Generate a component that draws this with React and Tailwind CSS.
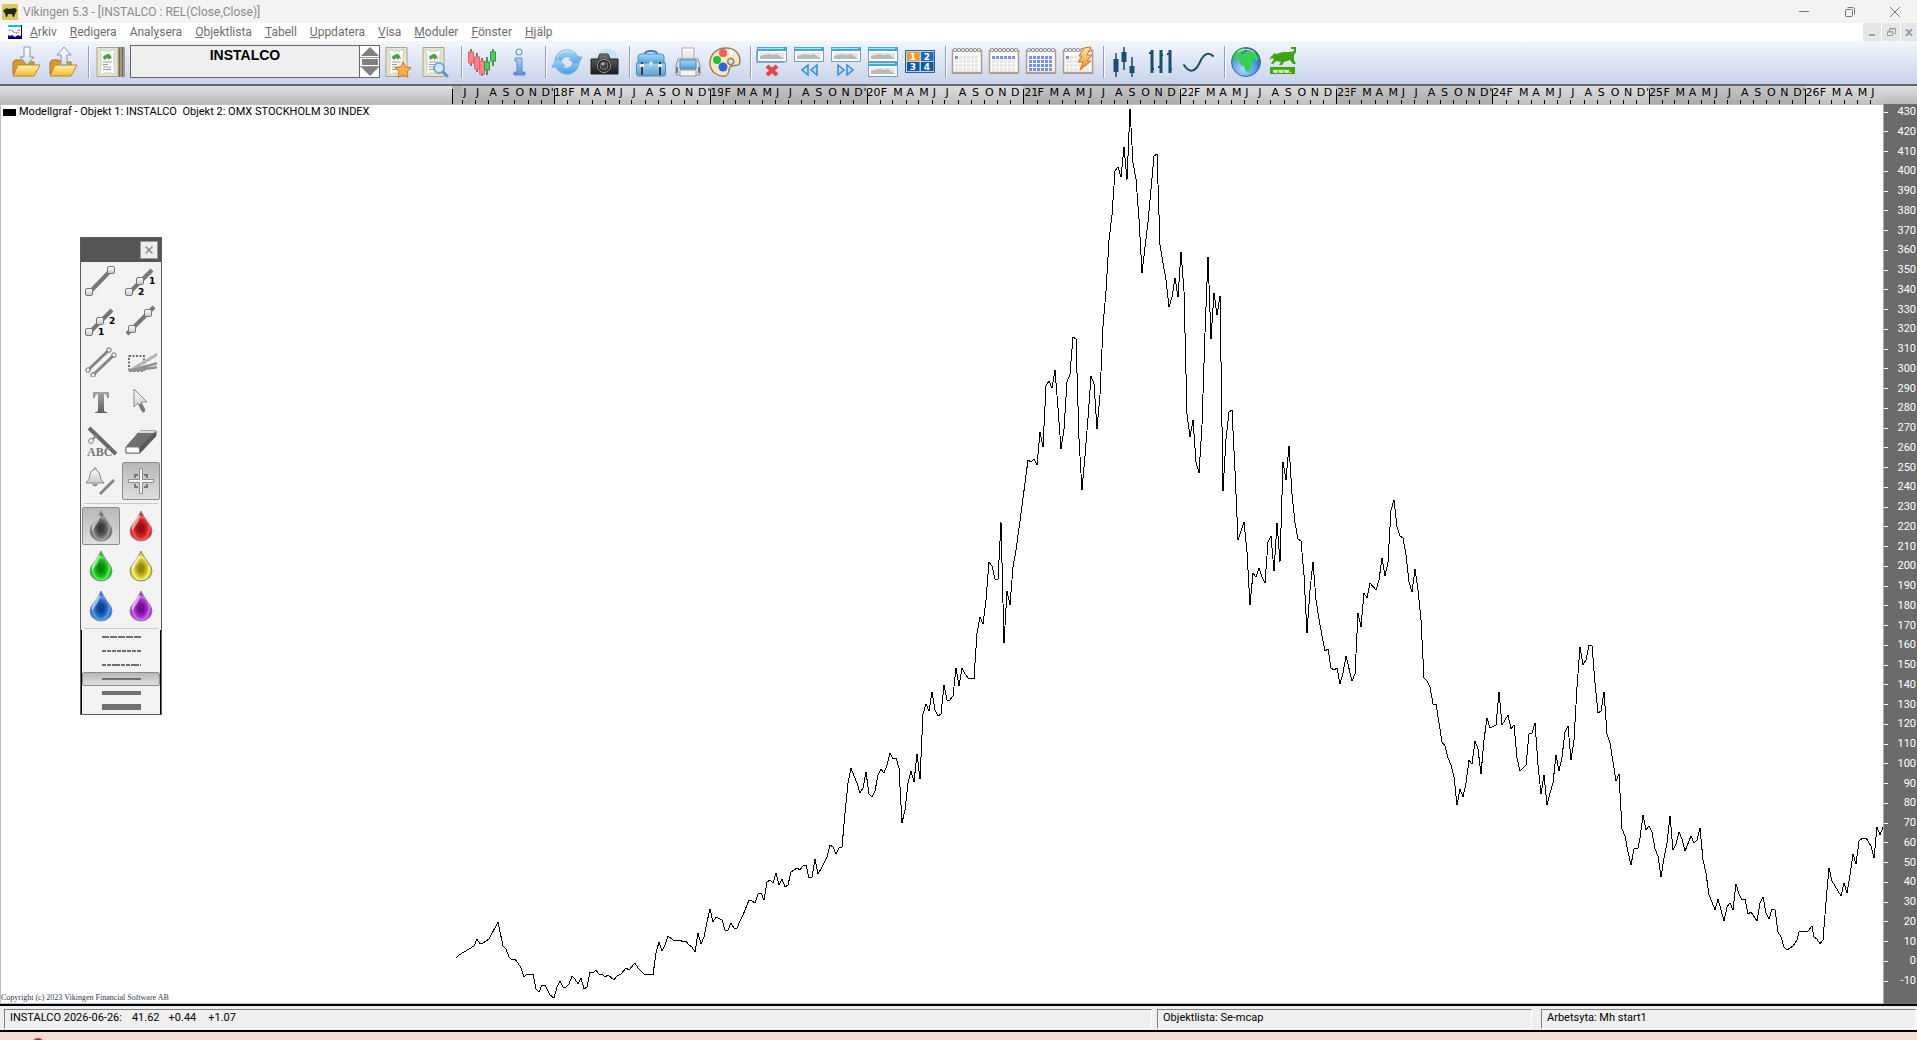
import { LuX } from "react-icons/lu";

const MENU = [
  ["", "A", "rkiv"],
  ["", "R", "edigera"],
  ["Anal", "y", "sera"],
  ["", "O", "bjektlista"],
  ["", "T", "abell"],
  ["", "U", "ppdatera"],
  ["", "V", "isa"],
  ["", "M", "oduler"],
  ["", "F", "önster"],
  ["", "H", "jälp"],
];

const LETTERS = ["J", "F", "M", "A", "M", "J", "J", "A", "S", "O", "N", "D"];
const DAYS = [31, 28, 31, 30, 31, 30, 31, 31, 30, 31, 30, 31];
const YEAR_LABELS = {
  2018: "'18",
  2019: "'19",
  2020: "'20",
  2021: "21",
  2022: "22",
  2023: "23",
  2024: "'24",
  2025: "'25",
  2026: "'26",
};

// one entry per month, weights are days so the ruler stretches with the plot
const MONTHS = [];
for (let year = 2017; year <= 2026; year++) {
  for (let m = 0; m < 12; m++) {
    if (year === 2017 && m < 5) continue;
    if (year === 2026 && m > 5) continue;
    MONTHS.push({
      key: `${year}-${m}`,
      label: m === 0 ? YEAR_LABELS[year] : LETTERS[m],
      january: m === 0,
      dark: year % 2 === 1,
      days: m === 1 && year % 4 === 0 ? 29 : DAYS[m],
    });
  }
}

const LEVELS = Array.from({ length: 45 }, (_, i) => 430 - i * 10);

const PRICE_LINE = `
456,958 459,955 474,946 477,939 480,944 483,943 489,939 498,922 503,946 506,949 509,957 512,960 515,959 518,963
521,968 524,977 526,975 533,974 536,989 539,992 542,985 545,985 550,995 554,998 557,987 560,981 563,987 566,987
569,984 572,976 575,979 578,984 581,978 584,989 587,987 590,972 593,973 596,970 599,974 602,974 605,977 608,975
614,980 617,976 621,974 626,968 629,970 635,963 638,968 644,974 650,974 653,975 656,953 659,942 662,951 665,945
668,936 673,940 679,940 684,942 686,941 689,945 692,947 695,952 698,933 701,944 704,937 707,922 710,909 713,922
716,917 722,920 725,930 728,930 731,923 734,928 737,928 740,921 743,915 749,900 752,901 755,903 758,894 761,893
764,900 767,882 770,880 773,883 776,873 779,885 782,879 785,887 788,885 791,872 797,868 800,870 803,866 806,865
809,878 812,877 815,859 818,874 821,869 827,857 830,845 833,847 836,854 839,848 842,847 845,813 848,783 851,768
854,776 857,783 860,793 863,788 866,772 869,794 872,797 875,791 878,775 881,769 884,773 887,765 890,753 893,759
896,758 899,768 902,823 905,810 908,783 911,771 914,782 917,754 920,779 923,714 926,704 929,711 932,692 935,710
938,716 941,714 944,685 947,700 950,700 953,696 956,668 959,686 962,668 965,674 968,678 974,679 977,633 980,617
983,624 986,600 989,562 992,566 995,579 998,579 1001,522 1004,643 1007,591 1010,605 1013,567 1016,550 1022,506
1028,460 1031,462 1034,459 1037,465 1040,432 1043,447 1046,386 1049,381 1052,388 1055,370 1058,408 1061,449
1064,429 1067,382 1070,374 1073,337 1076,339 1079,439 1082,490 1085,456 1088,418 1091,376 1094,384 1097,429
1100,395 1103,326 1106,291 1109,240 1112,215 1115,171 1118,167 1121,177 1124,147 1127,180 1130,109 1133,163
1136,179 1139,219 1142,273 1148,222 1154,156 1157,154 1160,245 1163,263 1166,280 1169,307 1172,297 1175,278
1178,297 1181,252 1184,291 1187,414 1190,437 1193,420 1196,462 1199,473 1202,425 1205,333 1208,257 1211,339
1214,293 1217,315 1220,296 1223,491 1226,439 1229,412 1232,410 1235,471 1238,540 1244,522 1247,552 1250,605
1253,573 1256,577 1259,568 1262,577 1265,583 1268,542 1271,536 1274,571 1277,523 1280,562 1283,462 1286,480
1289,446 1292,494 1295,523 1298,539 1301,541 1304,575 1307,633 1310,590 1313,562 1316,600 1319,619 1322,636
1325,651 1328,649 1331,668 1334,670 1337,668 1340,684 1343,673 1346,656 1352,681 1355,674 1358,613 1361,627
1364,593 1367,598 1370,583 1376,590 1379,580 1382,558 1385,576 1388,562 1391,510 1394,500 1397,527 1400,536
1403,538 1406,555 1409,582 1412,592 1415,569 1418,590 1421,620 1424,678 1427,681 1430,687 1433,704 1436,704
1439,723 1442,742 1445,746 1448,758 1451,765 1454,777 1457,805 1460,789 1463,797 1466,783 1469,760 1472,764
1475,741 1478,749 1481,774 1484,740 1487,718 1490,728 1496,725 1499,692 1502,725 1508,715 1511,729 1514,725
1517,758 1520,771 1526,765 1529,734 1532,733 1535,723 1538,765 1541,794 1544,775 1547,805 1550,793 1553,783
1556,755 1559,771 1562,757 1565,732 1568,726 1571,760 1574,740 1577,687 1580,647 1583,665 1586,660 1589,645
1592,646 1595,683 1598,713 1601,711 1604,692 1607,734 1610,743 1613,762 1616,781 1619,774 1622,829 1625,836
1628,852 1631,865 1634,849 1638,848 1640,838 1643,815 1646,830 1649,826 1652,832 1655,849 1658,856 1661,877
1664,858 1667,843 1670,816 1673,850 1676,844 1679,832 1682,839 1685,851 1691,836 1694,843 1697,840 1700,828
1703,860 1706,873 1709,895 1712,902 1715,910 1718,899 1724,921 1727,907 1730,903 1733,910 1736,884 1739,894
1742,900 1745,899 1748,914 1751,912 1757,921 1760,903 1763,897 1766,913 1769,919 1772,909 1775,910 1778,932
1781,937 1784,947 1787,950 1793,946 1797,940 1799,932 1808,931 1812,926 1814,937 1817,939 1820,944 1823,940
1826,902 1829,868 1832,881 1841,896 1844,883 1847,893 1850,875 1853,854 1856,864 1859,841 1863,838 1866,838
1871,846 1874,858 1877,827 1880,835 1883,827`;

function Icon({ children, size = 32 }) {
  return (
    <svg width={size} height={size} viewBox="0 0 32 32" fill="none" aria-hidden="true">
      {children}
    </svg>
  );
}

const DROPS = [
  ["Svart", "#707070", "#3c3c3c", "#a8a8a8"],
  ["Röd", "#dc2626", "#980f0f", "#ff6060"],
  ["Grön", "#22c322", "#0c8a0c", "#5cff5c"],
  ["Gul", "#d9cd30", "#968c14", "#fff67a"],
  ["Blå", "#2f74cf", "#0f4290", "#58a6ff"],
  ["Lila", "#ad30d6", "#6c1290", "#e66cff"],
];

function Gradients() {
  const vertical = { x1: 0, y1: 0, x2: 0, y2: 1 };
  const stops = {
    folder: ["#fff3b0", "#f2b92c"],
    arrow: ["#ffffff", "#d5dbe6"],
    blue: ["#a4dbfa", "#4a9de0"],
    steel: ["#a9d4f2", "#5b9dcc"],
    sheet: ["#ffffff", "#dcdcdc"],
    camera: ["#6a6a6a", "#1b1b1b"],
    bolt: ["#ffe9a8", "#f08a24"],
    plate: ["#fdfdfd", "#c9c9c9"],
    letter: ["#a5a5a5", "#5f5f5f"],
    info: ["#b9d2f4", "#5b8ddb"],
  };
  return (
    <svg className="absolute h-0 w-0" aria-hidden="true">
      <defs>
        {Object.entries(stops).map(([id, [a, b]]) => (
          <linearGradient key={id} id={id} {...vertical}>
            <stop offset="0" stopColor={a} />
            <stop offset="1" stopColor={b} />
          </linearGradient>
        ))}
        <radialGradient id="ocean" cx="0.4" cy="0.75" r="0.8">
          <stop offset="0" stopColor="#a9dcff" />
          <stop offset="0.5" stopColor="#5b9cf0" />
          <stop offset="1" stopColor="#174f86" />
        </radialGradient>
        {DROPS.map(([name, edge, core, glow], i) => (
          <radialGradient key={name} id={`drop-${i}`} cx="0.5" cy="0.58" r="0.43">
            <stop offset="0" stopColor={core} />
            <stop offset="0.3" stopColor={core} />
            <stop offset="0.7" stopColor={edge} />
            <stop offset="0.9" stopColor={glow} />
            <stop offset="1" stopColor={edge} />
          </radialGradient>
        ))}
      </defs>
    </svg>
  );
}

function Folder({ up }) {
  return (
    <Icon>
      <path d="M3 28V16l2-2h7l2 2h10v4" fill="#d99a2b" stroke="#a8741c" />
      <path d="M3 30 8 19h22l-6 11z" fill="url(#folder)" stroke="#b8862b" />
      {up ? (
        <path d="m17 1 7 8h-4v10h-6V9h-4z" fill="url(#arrow)" stroke="#8d97a8" />
      ) : (
        <path d="m17 19-7-8h4V1h6v10h4z" fill="url(#arrow)" stroke="#8d97a8" />
      )}
    </Icon>
  );
}

function Certificate({ extra, stack }) {
  return (
    <Icon>
      {stack && <path d="M20 1h11v30H20z" fill="#a39c82" />}
      {stack && <path d="M25.500 1v30M28.500 1v30" stroke="#6f6a58" />}
      <path d="M3 1.500h21v29H3z" fill="#e9e4cf" stroke="#a9a48c" />
      <path d="M6 4h3l1 1h7l1-1h3v3l-1 1v16l1 1v3h-3l-1-1h-7l-1 1H6v-3l1-1V8L6 7z" fill="#fff" stroke="#b9d7b3" />
      <path d="M9 12q0-3 3-3 2-3 5 1l1 3-2-1-1 2-2-2-2 2z" fill="#4f9d4a" />
      <path d="M9 16h9M9 18.500h5M9 21h8M9 23.500h8" stroke="#999" />
      {extra === "star" && (
        <path
          d="m20 16 2.500 5 5.500.8-4 4 1 5.500-5-2.600-5 2.600 1-5.500-4-4 5.500-.8z"
          fill="#fbb14b"
          stroke="#d9731b"
        />
      )}
      {extra === "lens" && (
        <g>
          <circle cx="19" cy="22" r="5" fill="#cfe8fb" stroke="#6fa8d8" strokeWidth="2" />
          <path d="m23 26 4 4" stroke="#5b93c6" strokeWidth="3" strokeLinecap="round" />
        </g>
      )}
    </Icon>
  );
}

function CandleIcon() {
  const bars = [
    [4, 6, 11, "#f98388", 3, 20],
    [10, 11, 12, "#f98388", 7, 26],
    [15, 15, 13, "#f98388", 12, 30],
    [20, 16, 8, "#4fd05c", 11, 29],
    [26, 6, 9, "#4fd05c", 3, 20],
  ];
  return (
    <Icon>
      {bars.map(([x, y, h, color, top, bottom]) => (
        <g key={x}>
          <path d={`M${x} ${top}V${bottom}`} stroke="#555" strokeWidth="1.500" />
          <rect x={x - 2.5} y={y} width="5" height={h} fill={color} stroke={color === "#4fd05c" ? "#2a9d38" : "#e0666b"} />
        </g>
      ))}
    </Icon>
  );
}

function InfoIcon() {
  return (
    <Icon>
      <circle cx="15" cy="6" r="3" fill="#e8f1fd" stroke="#6b97d9" strokeWidth="1.200" />
      <path d="M11 12h7v14h3v3H10v-3h3V15h-2z" fill="url(#info)" stroke="#5f8ed4" />
    </Icon>
  );
}

function RefreshIcon() {
  return (
    <Icon>
      <path d="M4 15A12 12 0 0 1 27 11l4 0-5 9-8-7h4A7 7 0 0 0 10 15z" fill="url(#blue)" stroke="#6db2e8" />
      <path d="M28 17A12 12 0 0 1 5 21l-4 0 5-9 8 8h-4A7 7 0 0 0 22 17z" fill="url(#blue)" stroke="#6db2e8" />
      <path d="M6 12a11 11 0 0 1 17-5" stroke="#d4efff" />
    </Icon>
  );
}

function CameraIcon() {
  return (
    <Icon>
      <circle cx="19" cy="15" r="12" fill="#c7e6f7" />
      <path d="M3 13h7l2-5h8l2 5h8v15H3z" fill="url(#camera)" stroke="#222" />
      <path d="M12 8h8l1 4H11z" fill="#666" />
      <circle cx="16" cy="20" r="6.500" fill="#222" stroke="#999" />
      <circle cx="16" cy="20" r="4" fill="#444" stroke="#777" />
      <circle cx="15" cy="18" r="1.200" fill="#ccc" />
    </Icon>
  );
}

function BriefcaseIcon() {
  return (
    <Icon>
      <path d="M10 8c0-4 12-4 12 0" stroke="#3a7fbd" strokeWidth="2" />
      <path d="M3 11q0-3 3-3h20q3 0 3 3v7H3z" fill="url(#blue)" stroke="#4a8cc4" />
      <path d="M1.500 17h29v11q0 2-2 2h-25q-2 0-2-2z" fill="url(#steel)" stroke="#4a8cc4" />
      <path d="M7 16v13M25 16v13" stroke="#3a3a3a" strokeWidth="2" />
      <path d="M5 18h4v3H5zM23 18h4v3h-4zM16 15l2 2-2 3-2-3z" fill="#eee" />
    </Icon>
  );
}

function PrinterIcon() {
  return (
    <Icon>
      <path d="M10 2h12v12H10z" fill="url(#sheet)" stroke="#aaa" />
      <path d="M6 13h20l2 6v10H4V19z" fill="#d9dde2" stroke="#8b929b" />
      <path d="M8 14h16v9H8z" fill="url(#blue)" stroke="#4f86b5" />
      <path d="M8 24h16v6H8z" fill="#f6f6f6" stroke="#999" />
      <path d="M5 21v6M27 21v6" stroke="#777" strokeWidth="2" />
    </Icon>
  );
}

function PaletteIcon() {
  return (
    <Icon>
      <path
        d="M17 2C7 2 1 9 1 17c0 9 8 14 15 13 5-1 3-6 5-9 3-3 10 1 10-6C31 7 25 2 17 2zm3 11a3 3 0 1 1 0 5 3 3 0 0 1 0-5z"
        fill="#f5e6c4"
        stroke="#9a8056"
        strokeWidth="1.500"
        fillRule="evenodd"
      />
      <circle cx="14" cy="7" r="4" fill="#ef5d5d" />
      <circle cx="22" cy="6" r="2.500" fill="#fff" />
      <circle cx="8" cy="14" r="4" fill="#2bc02b" />
      <circle cx="14" cy="21" r="4.500" fill="#2b68e0" />
    </Icon>
  );
}

function Pane({ y }) {
  return (
    <g>
      <path d={`M1.500 ${y + 0.5}h29v14h-29z`} fill="#fff" stroke="#6f9fc4" />
      <path d={`M1 ${y}h30v4H1z`} fill="#3fa9de" />
      <path d={`M2 ${y + 1}h26v1H2z`} fill="#aee3fa" />
      <path d={`M4 ${y + 6}h24v6H4z`} fill="#e6e6e6" />
      <path d={`M4 ${y + 9}l8-2 5 1 4-1 7 5H4z`} fill="#b9b9b9" />
    </g>
  );
}

function WindowIcon({ kind }) {
  return (
    <Icon>
      {kind === "close" && <path d="M.5 4v12.500h28" stroke="#7fb0d6" />}
      <Pane y={1} />
      {kind === "close" && (
        <path d="m11 20 10 9M21 20l-10 9" stroke="#e64545" strokeWidth="4" />
      )}
      {kind === "back" && <path d="m15 19-6 5 6 5zM24 19l-6 5 6 5z" fill="#b5e2fb" stroke="#2f8fd0" strokeWidth="1.500" />}
      {kind === "forward" && <path d="m8 19 6 5-6 5zM17 19l6 5-6 5z" fill="#b5e2fb" stroke="#2f8fd0" strokeWidth="1.500" />}
      {kind === "split" && <Pane y={16} />}
    </Icon>
  );
}

function NumberGridIcon() {
  const cells = [
    ["1", 3, 6, "#f09a28"],
    ["2", 17, 6, "#1b6bb5"],
    ["3", 3, 16, "#1558a0"],
    ["4", 17, 16, "#1558a0"],
  ];
  return (
    <Icon>
      <path d="M1.500 4.500h29v22h-29z" fill="#b9d2ea" stroke="#2a5f9a" />
      {cells.map(([n, x, y, fill]) => (
        <g key={n}>
          <rect x={x} y={y} width="12.500" height="9" fill={fill} />
          <text
            x={x + 6}
            y={y + 8}
            textAnchor="middle"
            className="fill-white font-['DejaVu_Sans'] text-[9px] font-bold"
          >
            {n}
          </text>
        </g>
      ))}
    </Icon>
  );
}

function CalendarIcon({ kind }) {
  const filled = {
    day: (r, c) => r === 0 && c === 0,
    week: (r) => r === 0,
    month: () => true,
    bolt: (r, c) => r === 0 && c === 0,
  }[kind];
  return (
    <Icon>
      <path d="M1.500 4.500h29v22h-29z" fill="#fcfcfa" stroke="#b39c8b" strokeWidth="1.500" />
      <path d="M1 27.500h30" stroke="#a99a8c" />
      {[3, 7, 11, 15, 19, 23, 27].map((x) => (
        <circle key={x} cx={x + 1} cy="4" r="1.600" fill="#fff" stroke="#8b8b8b" />
      ))}
      {[0, 1, 2, 3].map((r) =>
        [0, 1, 2, 3, 4, 5].map((c) => (
          <rect
            key={`${r}${c}`}
            x={4 + c * 4}
            y={10 + r * 4}
            width="3"
            height="3"
            fill={filled(r, c) ? "#7590f0" : "#e6e6e6"}
          />
        ))
      )}
      {kind === "bolt" && (
        <path d="m22 2 7-1-4 8h5l-5 6h4L18 24l3-8h-5l4-6h-3z" fill="url(#bolt)" stroke="#d2741c" />
      )}
    </Icon>
  );
}

function CandlesDark() {
  return (
    <Icon>
      <path d="M7 7v24M15 1v23M23 11v20" stroke="#194e73" strokeWidth="1.500" />
      <path d="M4.500 13h5v13h-5zM12.500 6h5v10h-5zM20.500 20h5v7h-5z" fill="#194e73" />
    </Icon>
  );
}

function BarsDark() {
  return (
    <Icon>
      <path d="M6 4v23M15 4v23M24 4v23" stroke="#194e73" strokeWidth="3" />
      <path d="M3 7h3M6 23h2M12 21h3M15 9h2M21 8h3M24 23h2" stroke="#194e73" strokeWidth="2" />
    </Icon>
  );
}

function WaveDark() {
  return (
    <Icon>
      <path d="M1 19c5 8 11 8 16-3 4-9 9-10 13-6" stroke="#194e73" strokeWidth="2" strokeLinecap="round" />
    </Icon>
  );
}

function GlobeIcon() {
  return (
    <Icon>
      <circle cx="16" cy="16" r="14.500" fill="url(#ocean)" stroke="#3f6f9c" />
      <path d="M4 9q4-6 10-7l1 3-4 2 1 3-3 1-2 4-4 1zM12 9l6-5 7 2 4 7-3 2-3-3-2 2 3 2-3 4-1 5-4 1-2-6-4-2-1-4z" fill="#35d34c" />
      <path d="M8 6a13 13 0 0 1 16 0" stroke="#dff6e6" />
    </Icon>
  );
}

function BullIcon() {
  return (
    <Icon>
      <path
        d="M2 14q1-3 4-5l1-2 2 1 7-2 8 0 3-1V3h-3V1h5v5l-2 3v5l2 4h-3l-3-4-6 2-2 3h-3l2-3-5-1-3 3H4l3-5-2-1z"
        fill="#3da60b"
      />
      <path d="M3 21h25v7H3z" fill="#3da60b" />
      <text
        x="15"
        y="27"
        textAnchor="middle"
        className="fill-white font-['DejaVu_Sans'] text-[6px] font-bold"
      >
        www.
      </text>
    </Icon>
  );
}

function ToolButton({ label, children }) {
  return (
    <button type="button" aria-label={label} className="flex w-[37px] shrink-0 items-center justify-center">
      {children}
    </button>
  );
}

function Separator() {
  return <div className="mr-px ml-[7px] h-8 w-[2px] shrink-0 border-r border-white bg-[#8f9db8]" />;
}

function TitleBar() {
  return (
    <header className="flex h-[23px] items-center bg-[#f3f3f3] pl-[2px] text-[12px] text-[#8b8b8b]">
      <svg width="16" height="16" viewBox="0 0 16 16" aria-hidden="true">
        <rect width="16" height="16" rx="1" fill="#d9c95b" />
        <path d="M1 7q3-4 6-2l6-1 2 2-2 4-1 3h-1l-1-3H6l-1 3H4L3 9z" fill="#222" />
      </svg>
      <h1 className="ml-[5px] grow">Vikingen 5.3 - [INSTALCO : REL(Close,Close)]</h1>
      <button type="button" aria-label="Minimera" className="flex h-full w-[46px] items-center justify-center">
        <span className="h-px w-[10px] bg-[#777]" />
      </button>
      <button type="button" aria-label="Återställ" className="flex h-full w-[46px] items-center justify-center">
        <svg width="10" height="10" viewBox="0 0 10 10" fill="none" stroke="#777" aria-hidden="true">
          <rect x="0.500" y="2.500" width="7" height="7" rx="1" />
          <path d="M2.500.5h5q2 0 2 2v5" />
        </svg>
      </button>
      <button type="button" aria-label="Stäng" className="flex h-full w-11 items-center justify-center">
        <svg width="10" height="10" viewBox="0 0 10 10" stroke="#777" aria-hidden="true">
          <path d="m0 0 10 10M10 0 0 10" />
        </svg>
      </button>
    </header>
  );
}

function MenuBar() {
  return (
    <nav className="flex h-[18px] items-center bg-white pl-2 text-[12px] text-[#6d6d6d]">
      <svg width="14" height="14" viewBox="0 0 14 14" aria-hidden="true">
        <rect width="14" height="14" fill="#fff" />
        <path d="M0 0h14v2H0z" fill="#00c8e8" />
        <path d="M1 5h2v1h2v1h2v1h3V5h2" stroke="#d22" fill="none" strokeDasharray="1 1" />
        <path d="M0 14v-4l2 1 2-1 3 2 3-2 2 1 2-1v4z" fill="#0000b8" />
        <path d="M13.500 0v14M0 13.500h14" stroke="#000" />
      </svg>
      <ul className="ml-2 flex gap-[13px]">
        {MENU.map(([before, key, after]) => (
          <li key={before + key + after}>
            <a href="#" className="block leading-5">
              {before}
              <span className="underline">{key}</span>
              {after}
            </a>
          </li>
        ))}
      </ul>
      <div className="ml-auto flex h-full gap-px">
        <button type="button" aria-label="Minimera dokument" className="flex w-[18px] items-center justify-center bg-[#e6e6e6]">
          <span className="mt-[5px] h-[2px] w-[6px] bg-[#8fa3b5]" />
        </button>
        <button type="button" aria-label="Återställ dokument" className="flex w-[18px] items-center justify-center bg-[#e6e6e6]">
          <svg width="9" height="8" viewBox="0 0 9 8" fill="none" stroke="#8fa3b5" aria-hidden="true">
            <path d="M.5 3.500h5v4h-5zM.5 4h5M2.500 3V.5h6v5h-2M2.500 1h6" />
          </svg>
        </button>
        <button type="button" aria-label="Stäng dokument" className="flex w-4 items-center justify-center bg-[#e6e6e6]">
          <svg width="8" height="7" viewBox="0 0 8 7" stroke="#8fa3b5" strokeWidth="2" aria-hidden="true">
            <path d="m1 0 6 7M7 0 1 7" />
          </svg>
        </button>
      </div>
    </nav>
  );
}

function ObjectPicker() {
  return (
    <div className="ml-[2px] flex h-[33px] w-[250px] shrink-0 border border-[#666] bg-[#efefef]">
      <input
        aria-label="Objekt"
        readOnly
        value="INSTALCO"
        className="h-[18px] min-w-0 grow text-center font-['Liberation_Sans',sans-serif] text-[14px] font-bold text-black outline-none"
      />
      <div className="flex w-5 flex-col border-l border-[#666] bg-white">
        <button type="button" aria-label="Föregående" className="flex grow items-center justify-center">
          <svg width="18" height="9" viewBox="0 0 18 9" aria-hidden="true">
            <path d="M9 0 18 9H0z" fill="#808080" />
          </svg>
        </button>
        <button type="button" aria-label="Lista" className="flex h-[10px] items-center justify-center border-y border-[#999]">
          <span className="h-[6px] w-4 bg-[#808080]" />
        </button>
        <button type="button" aria-label="Nästa" className="flex grow items-center justify-center">
          <svg width="18" height="9" viewBox="0 0 18 9" aria-hidden="true">
            <path d="M9 9 0 0h18z" fill="#808080" />
          </svg>
        </button>
      </div>
    </div>
  );
}

function Toolbar() {
  return (
    <div className="flex h-[43px] items-center bg-linear-to-b from-[#f3f6fc] to-[#c8d2ea] pb-[2px] pl-[7px]">
      <ToolButton label="Hämta"><Folder /></ToolButton>
      <ToolButton label="Spara"><Folder up /></ToolButton>
      <Separator />
      <ToolButton label="Objekt"><Certificate stack /></ToolButton>
      <ObjectPicker />
      <ToolButton label="Favoriter"><Certificate extra="star" /></ToolButton>
      <ToolButton label="Sök"><Certificate extra="lens" /></ToolButton>
      <Separator />
      <ToolButton label="Modeller"><CandleIcon /></ToolButton>
      <ToolButton label="Information"><InfoIcon /></ToolButton>
      <Separator />
      <ToolButton label="Uppdatera"><RefreshIcon /></ToolButton>
      <ToolButton label="Kamera"><CameraIcon /></ToolButton>
      <Separator />
      <ToolButton label="Portfölj"><BriefcaseIcon /></ToolButton>
      <ToolButton label="Skriv ut"><PrinterIcon /></ToolButton>
      <ToolButton label="Färger"><PaletteIcon /></ToolButton>
      <Separator />
      <ToolButton label="Stäng fönster"><WindowIcon kind="close" /></ToolButton>
      <ToolButton label="Föregående fönster"><WindowIcon kind="back" /></ToolButton>
      <ToolButton label="Nästa fönster"><WindowIcon kind="forward" /></ToolButton>
      <ToolButton label="Dela"><WindowIcon kind="split" /></ToolButton>
      <ToolButton label="Ordna"><NumberGridIcon /></ToolButton>
      <Separator />
      <ToolButton label="Dag"><CalendarIcon kind="day" /></ToolButton>
      <ToolButton label="Vecka"><CalendarIcon kind="week" /></ToolButton>
      <ToolButton label="Månad"><CalendarIcon kind="month" /></ToolButton>
      <ToolButton label="Intradag"><CalendarIcon kind="bolt" /></ToolButton>
      <Separator />
      <ToolButton label="Ljusstakar"><CandlesDark /></ToolButton>
      <ToolButton label="Staplar"><BarsDark /></ToolButton>
      <ToolButton label="Linje"><WaveDark /></ToolButton>
      <Separator />
      <ToolButton label="Internet"><GlobeIcon /></ToolButton>
      <ToolButton label="Webbplats"><BullIcon /></ToolButton>
    </div>
  );
}

function TimeRuler() {
  return (
    <div className="flex h-[20px] border-t-2 border-[#686868] bg-linear-to-b from-[#e0e0e0] to-[#bababa] pr-[34px] font-['DejaVu_Sans',sans-serif] text-[11px] leading-[14px] text-black">
      <div className="basis-0" style={{ flexGrow: 1055 }} />
      <div className="relative basis-0 bg-[#b4b4b4]" style={{ flexGrow: 24 }}>
        <span className="absolute bottom-0 left-0 h-[15px] w-px bg-black" />
      </div>
      {MONTHS.map((m) => (
        <div
          key={m.key}
          style={{ flexGrow: m.days }}
          className={`relative min-w-0 basis-0 whitespace-nowrap ${
            m.dark ? "bg-linear-to-b from-[#c6c6c6] to-[#acacac]" : "bg-linear-to-b from-[#dedede] to-[#c0c0c0]"
          }`}
        >
          <span className={`absolute bottom-0 left-0 w-px bg-black ${m.january ? "h-[15px]" : "h-[4px]"}`} />
          <span className={m.label.startsWith("'") ? "relative -ml-[3px]" : "relative ml-[1px]"}>{m.label}</span>
        </div>
      ))}
    </div>
  );
}

function LineTool({ from, to, handles, labels = [] }) {
  return (
    <Icon>
      <path d={`M${from[0]} ${from[1]} ${to[0]} ${to[1]}`} stroke="#777" strokeWidth="4" />
      {handles.map(([x, y]) => (
        <rect key={`${x}-${y}`} x={x - 3.5} y={y - 3.5} width="7" height="7" rx="1.500" fill="url(#plate)" stroke="#777" />
      ))}
      {labels.map(([t, x, y]) => (
        <text key={t} x={x} y={y} className="fill-black font-['DejaVu_Sans'] text-[9px] font-bold">
          {t}
        </text>
      ))}
    </Icon>
  );
}

const DRAW_TOOLS = [
  ["Trendlinje", <LineTool key="a" from={[4, 28]} to={[26, 5]} handles={[[4, 27], [26, 5]]} />],
  ["Trend bakåt", <LineTool key="b" from={[4, 28]} to={[27, 5]} handles={[[4, 27], [15, 16]]} labels={[["1", 24, 19], ["2", 13, 30]]} />],
  ["Trend framåt", <LineTool key="c" from={[4, 28]} to={[27, 5]} handles={[[4, 27], [15, 16]]} labels={[["2", 24, 19], ["1", 13, 30]]} />],
  ["Förlängd linje", <LineTool key="d" from={[2, 29]} to={[29, 2]} handles={[[7, 24], [23, 8]]} />],
  [
    "Parallella linjer",
    <Icon key="e">
      <path d="M3 25 24 5M8 30 29 10" stroke="#858585" strokeWidth="3" />
      {[[3, 25], [24, 5], [8, 30], [29, 10]].map(([x, y]) => (
        <circle key={x} cx={x} cy={y} r="2.200" fill="#f5f5f5" stroke="#666" />
      ))}
    </Icon>,
  ],
  [
    "Solfjäder",
    <Icon key="f">
      <rect x="4" y="11" width="15" height="15" stroke="#444" strokeWidth="1.500" strokeDasharray="2 1.500" />
      <path d="M4 26 33 9" stroke="#b5b5b5" strokeWidth="3" />
      <path d="M4 26l29-8M4 26l29-4" stroke="#909090" strokeWidth="2.500" />
    </Icon>,
  ],
  [
    "Text",
    <Icon key="g">
      <path d="M8 7h16v6h-2q0-4-3-4v16q0 2 3 2v1H10v-1q3 0 3-2V9q-3 0-3 4H8z" fill="url(#letter)" />
    </Icon>,
  ],
  [
    "Markera",
    <Icon key="h">
      <path d="M9 4v18l4-4 4 8 3-1-4-8h6z" fill="url(#plate)" stroke="#888" />
      <path d="m15 19 4 8" stroke="#777" strokeWidth="3" />
    </Icon>,
  ],
  [
    "Linjetext",
    <Icon key="i">
      <path d="M4 3 31 29" stroke="#6a6a6a" strokeWidth="4" />
      <path d="m7 15 5-5" stroke="#888" strokeWidth="2" />
      <circle cx="6" cy="16" r="2.500" fill="#eee" stroke="#888" />
      <text x="2" y="31" className="fill-[#777] font-['Liberation_Serif'] text-[12px] font-bold">
        ABC
      </text>
    </Icon>,
  ],
  [
    "Sudda",
    <Icon key="j">
      <path d="m1 22 14-16h16v5L15 28H1z" fill="#5b5b5b" stroke="#666" />
      <path d="m1 22 14-16h16L14 22z" fill="#707070" />
      <path d="M1 22h13l1 6H1z" fill="#fff" stroke="#777" />
      <path d="m14 6 17 0-2 2H13z" fill="#ddd" />
    </Icon>,
  ],
  [
    "Larm",
    <Icon key="k">
      <path d="M1 18q4-3 4-9 1-4 4-4V3h2v2q3 1 4 5 0 5 4 8z" fill="url(#plate)" stroke="#888" />
      <path d="M8 19q2 3 4 0" stroke="#888" strokeWidth="2" />
      <path d="m15 29 14-14" stroke="#888" strokeWidth="3" />
    </Icon>,
  ],
  [
    "Hårkors",
    <Icon key="l">
      <path d="M10 13V10h3M19 10h3v3M22 19v3h-3M13 22h-3v-3" stroke="#777" strokeWidth="2" />
      <path d="M14.500 3.500h3v11h11v3h-11v11h-3v-11h-11v-3h11z" fill="#f5f5f5" stroke="#8a8a8a" />
    </Icon>,
  ],
];

function Drop({ index }) {
  return (
    <Icon>
      <path
        d="M16 1q2 5 6 10 5 6 5 10a11 10 0 0 1-22 0q0-4 5-10 4-5 6-10z"
        fill={`url(#drop-${index})`}
        stroke="#888"
      />
      <path d="M15 5q-1 7-8 15 0-7 8-15z" fill="#fff" stroke="#fff" opacity="0.500" />
    </Icon>
  );
}

const STROKES = [
  { name: "Långstreckad", h: 2, dash: "7 1" },
  { name: "Streckad", h: 2, dash: "4 1" },
  { name: "Streckprickad", h: 2, dash: "4 1 4 1 8 1" },
  { name: "Tunn", h: 2, active: true },
  { name: "Mellan", h: 4 },
  { name: "Tjock", h: 6 },
];

const PRESSED = "border-[#8c8c8c] bg-linear-to-b from-[#b8b8b8] to-[#dedede]";

function DrawPalette() {
  return (
    <aside className="absolute top-[132px] left-[79px] w-[82px] border border-[#5c5c5c] bg-[#f2f2f2]">
      <div className="flex h-6 items-center justify-end bg-[#555] pr-[3px]">
        <button
          type="button"
          aria-label="Stäng ritverktyg"
          className="flex size-[18px] items-center justify-center border border-[#999] bg-[#eee] text-[#888]"
        >
          <LuX size={12} strokeWidth={3} />
        </button>
      </div>
      <div className="grid grid-cols-2 gap-x-[2px] gap-y-[2px] px-px">
        {DRAW_TOOLS.map(([name, icon], i) => (
          <button
            key={name}
            type="button"
            aria-label={name}
            className={`flex h-[38px] items-center justify-center rounded-xs border ${
              i === 11 ? PRESSED : "border-transparent"
            }`}
          >
            {icon}
          </button>
        ))}
      </div>
      <div className="mx-[3px] my-[3px] h-px bg-[#c8c8c8]" />
      <div className="grid grid-cols-2 gap-x-[2px] gap-y-[2px] px-px">
        {DROPS.map(([name], i) => (
          <button
            key={name}
            type="button"
            aria-label={name}
            className={`flex h-[38px] items-center justify-center rounded-xs border ${
              i === 0 ? PRESSED : "border-transparent"
            }`}
          >
            <Drop index={i} />
          </button>
        ))}
      </div>
      <div className="mx-[3px] mt-[3px] h-px bg-[#c8c8c8]" />
      <div className="mt-px border-x border-black">
        {STROKES.map(({ name, h, dash, active }) => (
          <button
            key={name}
            type="button"
            aria-label={name}
            className={`flex h-[14px] w-full items-center justify-center rounded-xs border ${
              active ? PRESSED : "border-transparent"
            }`}
          >
            <svg width="39" height={h} aria-hidden="true">
              <path d={`M0 ${h / 2}h39`} stroke="#707070" strokeWidth={h} strokeDasharray={dash} />
            </svg>
          </button>
        ))}
      </div>
    </aside>
  );
}

function Plot() {
  return (
    <main className="relative flex min-w-0 grow flex-col justify-between border-t border-b border-l border-[#bdbdbd] bg-white">
      <svg
        className="absolute inset-0 h-full w-full"
        viewBox="1 105 1882 898"
        preserveAspectRatio="none"
        shapeRendering="crispEdges"
        role="img"
        aria-label="INSTALCO"
      >
        <polyline points={PRICE_LINE} fill="none" stroke="#000" vectorEffect="non-scaling-stroke" />
      </svg>
      <div className="relative flex items-center gap-[3px] pl-[2px] text-[11px] leading-[14px] whitespace-pre text-black">
        <span className="h-[7px] w-[13px] bg-black" />
        <p>{"Modellgraf - Objekt 1: INSTALCO  Objekt 2: OMX STOCKHOLM 30 INDEX"}</p>
      </div>
      <p className="relative font-['Liberation_Serif',serif] text-[8px] leading-[10px] text-[#2c3a55]">
        Copyright (c) 2023 Vikingen Financial Software AB
      </p>
      <DrawPalette />
    </main>
  );
}

function ValueAxis() {
  return (
    <ol className="flex w-[34px] shrink-0 flex-col justify-between border-l border-[#a8a8a8] bg-[#6b6b6b] pt-px pb-4 text-[11px] leading-[14px] text-white">
      {LEVELS.map((v) => (
        <li key={v} className="flex items-center justify-between pr-px">
          <span className="h-px w-1 bg-white" />
          {v}
        </li>
      ))}
    </ol>
  );
}

function StatusBar() {
  const cell = "h-5 overflow-hidden border-t border-l border-[#808080] border-r-white border-b-white px-[5px] border-r border-b leading-4 whitespace-pre";
  return (
    <footer className="flex h-[28px] items-start border-y-2 border-black bg-[#efefef] pt-[3px] pr-px pl-1 text-[11px] text-black">
      <div className={`${cell} grow-[3] basis-0`}>
        <span>INSTALCO 2026-06-26:</span>
        <span className="ml-[10px]">41.62</span>
        <span className="ml-[9px]">+0.44</span>
        <span className="ml-3">+1.07</span>
      </div>
      <div className={`${cell} ml-[5px] w-[375px]`}>Objektlista: Se-mcap</div>
      <div className={`${cell} ml-[9px] w-[375px]`}>Arbetsyta: Mh start1</div>
    </footer>
  );
}

export default function App() {
  return (
    <div className="flex h-screen flex-col overflow-hidden bg-[#f5ddd0] font-['Roboto','Liberation_Sans',sans-serif]">
      <Gradients />
      <TitleBar />
      <MenuBar />
      <Toolbar />
      <TimeRuler />
      <div className="flex min-h-0 grow">
        <Plot />
        <ValueAxis />
      </div>
      <StatusBar />
      <div className="h-2 shrink-0 overflow-hidden pt-[6px] pl-8">
        <div className="h-4 w-3 rounded-full bg-[#b02a3a]" />
      </div>
    </div>
  );
}
